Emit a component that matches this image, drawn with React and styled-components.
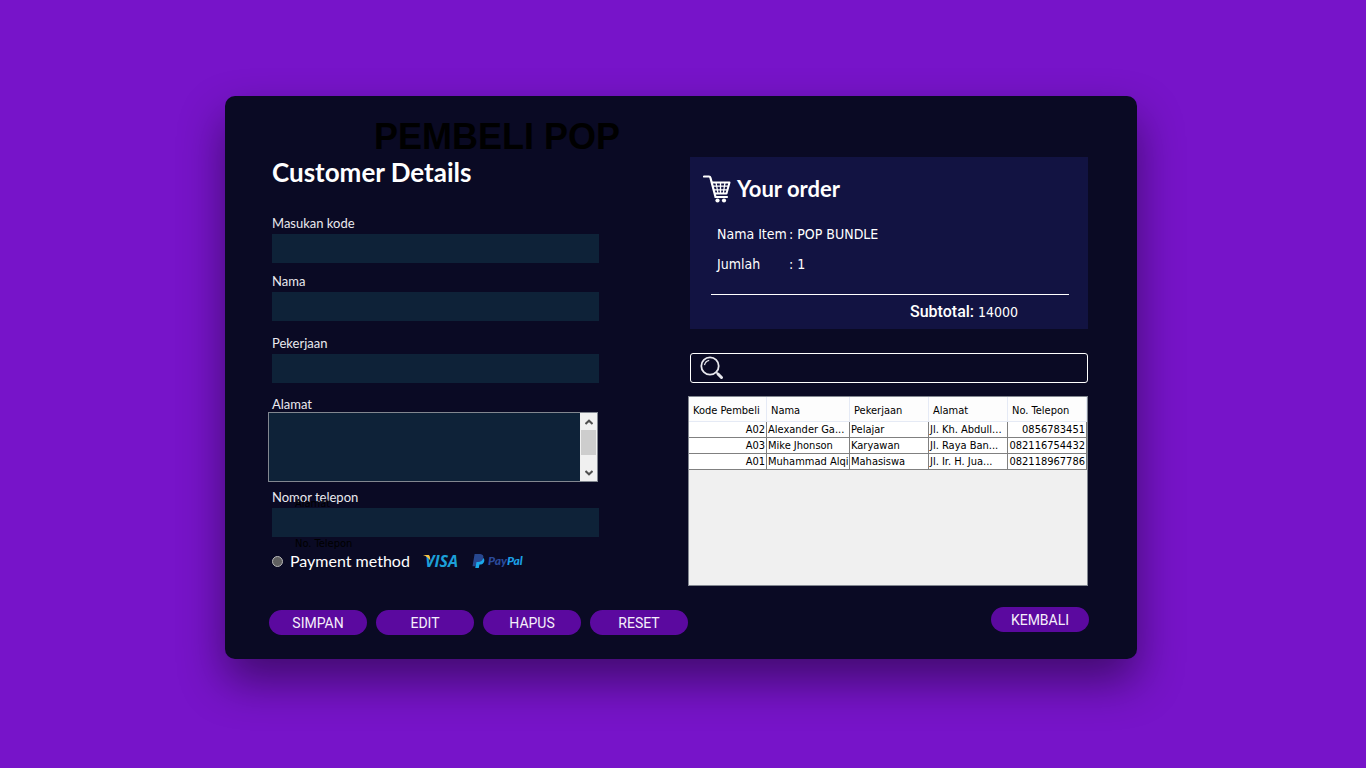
import React from "react";
import styled, { createGlobalStyle } from "styled-components";

const geometric = `"Century Gothic", Lato, "Open Sans", sans-serif`;
const tahoma = `Tahoma, "DejaVu Sans Condensed", "DejaVu Sans", sans-serif`;

const GlobalStyle = createGlobalStyle`
  *, *::before, *::after { box-sizing: border-box; }
  body {
    margin: 0;
    background: #7714c9;
    color: #ffffff;
    font-family: ${geometric};
  }
  #root { min-height: 100vh; }
`;

const Page = styled.div`
  min-height: 100vh;
  padding: 96px 229px 109px 225px;
`;

const Card = styled.main`
  padding: 21px 48px 24px 43px;
  background: #0a0a24;
  border-radius: 10px;
  box-shadow: 0 22px 46px rgba(0, 0, 0, 0.45);
`;

const PageTitle = styled.h1`
  margin: 0;
  padding-left: 106px;
  color: #000000;
  font: bold 36px/40px "Liberation Sans", Arial, sans-serif;
`;

const Columns = styled.div`
  display: grid;
  grid-template-columns: minmax(0, 332fr) minmax(0, 401fr);
  column-gap: 88px;
  align-items: start;
`;

const CustomerForm = styled.form`
  display: flex;
  flex-direction: column;
`;

const FormHeading = styled.h2`
  margin: 0 0 28px;
  padding-left: 4px;
  font-size: 26px;
  line-height: 30px;
  font-weight: 700;
`;

const Field = styled.div`
  position: relative;
  display: flex;
  flex-direction: column;
  padding: 0 1px 0 ${(p) => (p.$wide ? 0 : 4)}px;
  margin-bottom: ${(p) => p.$space}px;
`;

const Label = styled.label`
  padding-left: ${(p) => (p.$indent ? 4 : 0)}px;
  margin-bottom: ${(p) => (p.$indent ? 0 : 3)}px;
  color: #e9e9ee;
  font-size: 13px;
  line-height: 16px;
`;

const TextInput = styled.input`
  position: relative;
  width: 100%;
  height: 29px;
  padding: 0 8px;
  border: 0;
  outline: 0;
  background: #0e2238;
  color: #ffffff;
  font: 13px ${tahoma};
`;

const ScrollFrame = styled.div`
  display: flex;
  height: 70px;
  margin-right: 1px;
  border: 1px solid #828790;
  background: #0e2238;
`;

const TextArea = styled.textarea`
  flex: 1;
  min-width: 0;
  padding: 4px;
  border: 0;
  outline: 0;
  resize: none;
  overflow: hidden;
  background: transparent;
  color: #ffffff;
  font: 13px ${tahoma};
`;

const ScrollBar = styled.div`
  display: flex;
  flex-direction: column;
  width: 17px;
  padding: 0 1px;
  background: #f0f0f0;
`;

const ScrollButton = styled.button`
  display: flex;
  align-items: center;
  justify-content: center;
  height: 17px;
  padding: 0;
  border: 0;
  background: transparent;
`;

const ScrollThumb = styled.div`
  height: 25px;
  margin-bottom: auto;
  background: #cdcdcd;
`;

const StrayCaption = styled.span`
  position: absolute;
  left: 27px;
  top: ${(p) => p.$top}px;
  color: #000000;
  font: 11px/14px ${tahoma};
`;

const Payment = styled.div`
  display: flex;
  align-items: center;
  height: 20px;
  padding-left: 4px;
`;

const PaymentRadio = styled.input`
  appearance: none;
  width: 11px;
  height: 11px;
  margin: 0 7px 0 0;
  border: 1px solid #b9b9b9;
  border-radius: 50%;
  background: #5f5f5f;
`;

const PaymentLabel = styled.label`
  font-size: 16px;
  line-height: 20px;
`;

const CardBrands = styled.div`
  display: flex;
  align-items: center;
  gap: 10px;
  margin-left: 12px;
`;

const OrderColumn = styled.div`
  display: flex;
  flex-direction: column;
`;

const OrderPanel = styled.section`
  height: 172px;
  margin: 0 1px 24px 2px;
  padding: 17px 19px 0 13px;
  background: #121342;
`;

const OrderHeading = styled.h2`
  display: flex;
  align-items: center;
  gap: 6px;
  margin: 0 0 15px;
  font-size: 22px;
  line-height: 30px;
  font-weight: 700;
`;

const OrderLines = styled.dl`
  display: grid;
  grid-template-columns: 72px 1fr;
  margin: 0 0 15px 14px;
  font: 14px/30px ${tahoma};

  dt, dd { margin: 0; }
`;

const Subtotal = styled.div`
  display: flex;
  gap: 4px;
  margin-left: 8px;
  padding-left: 199px;
  border-top: 1px solid #ffffff;
  font: 14px/34px ${tahoma};
`;

const SubtotalLabel = styled.span`
  font: 500 16px/34px Roboto, sans-serif;
`;

const SearchBox = styled.label`
  display: flex;
  align-items: center;
  gap: 8px;
  height: 30px;
  margin: 0 1px 13px 2px;
  padding: 0 8px;
  border: 1px solid #ffffff;
  border-radius: 3px;
`;

const SearchInput = styled.input`
  flex: 1;
  min-width: 0;
  border: 0;
  outline: 0;
  background: transparent;
  color: #ffffff;
  font: 14px ${tahoma};
`;

const TableFrame = styled.div`
  height: 190px;
  margin-right: 1px;
  border: 1px solid #828790;
  background: #f0f0f0;
  color: #000000;
`;

const Table = styled.table`
  width: 100%;
  table-layout: fixed;
  border-collapse: separate;
  border-spacing: 0;
  font: 11px/15px ${tahoma};
`;

const HeadCell = styled.th`
  width: ${(p) => p.$width};
  height: 25px;
  padding: 2px 0 0 4px;
  overflow: hidden;
  background: #fdfdfd;
  border-right: 1px solid #e5eaf5;
  border-bottom: 1px solid #e5eaf5;
  font-weight: 400;
  text-align: left;
  white-space: nowrap;
`;

const Cell = styled.td`
  height: 16px;
  padding: 0 ${(p) => (p.$numeric ? 1 : 0)}px 0 1px;
  overflow: hidden;
  background: #ffffff;
  border-right: 1px solid #808080;
  border-bottom: 1px solid #808080;
  text-align: ${(p) => (p.$numeric ? "right" : "left")};
  white-space: nowrap;
`;

const Actions = styled.div`
  display: flex;
  justify-content: space-between;
  padding: 21px 0 0 1px;
`;

const ActionGroup = styled.div`
  display: flex;
  gap: 9px;
  padding-top: 3px;
`;

const PillButton = styled.button`
  width: 98px;
  height: 25px;
  padding: 1px 0 0;
  border: 0;
  border-radius: 13px;
  background: #5b099f;
  color: #f5effa;
  font: 14px/24px Roboto, sans-serif;
`;

const buyers = [
  ["A02", "Alexander Ga...", "Pelajar", "Jl. Kh. Abdull...", "0856783451"],
  ["A03", "Mike Jhonson", "Karyawan", "Jl. Raya Ban...", "082116754432"],
  ["A01", "Muhammad Alqi", "Mahasiswa", "Jl. Ir. H. Jua...", "082118967786"],
];

const columns = [
  { title: "Kode Pembeli", width: "78px" },
  { title: "Nama", width: "83px" },
  { title: "Pekerjaan", width: "auto" },
  { title: "Alamat", width: "auto" },
  { title: "No. Telepon", width: "auto" },
];

function Chevron({ up }) {
  return (
    <svg width="8" height="6" viewBox="0 0 8 6" aria-hidden="true">
      <path
        d={up ? "M.5 5 4 1.700 7.500 5" : "M.5 1 4 4.300 7.500 1"}
        fill="none"
        stroke="#505050"
        strokeWidth="2"
      />
    </svg>
  );
}

function CartIcon() {
  return (
    <svg width="28" height="28" viewBox="0 0 28 28" fill="none" stroke="#fff" aria-hidden="true">
      <path d="M1 1.500h5c1 0 1.300.6 1.500 1.400L12.500 22H24" strokeWidth="2.200" strokeLinecap="round" />
      <path d="M8.500 7.500H26.500L23.500 18.500H11.500" strokeWidth="2" strokeLinejoin="round" />
      <path d="M9.500 11.200H25.500M10.500 14.800H24.500M13 7.500l2 11M17.500 7.500v11M22 7.500l-1.700 11" strokeWidth="1.300" />
      <circle cx="14.500" cy="25.500" r="2.100" fill="#fff" stroke="none" />
      <circle cx="21" cy="25.500" r="2.100" fill="#fff" stroke="none" />
    </svg>
  );
}

function SearchIcon() {
  return (
    <svg width="26" height="26" viewBox="0 0 26 26" fill="none" stroke="#e8e8ee" aria-hidden="true">
      <circle cx="11" cy="11" r="8.700" strokeWidth="1.800" />
      <path d="M5.500 10.200A6 6 0 0 1 10.200 5.300" strokeWidth="1.200" />
      <path d="M17.300 17.300l1.500 1.500" strokeWidth="1.600" />
      <path d="M19 19l3.500 3.500" strokeWidth="3" strokeLinecap="round" />
    </svg>
  );
}

function VisaLogo() {
  return (
    <svg width="40" height="16" viewBox="0 0 40 16" role="img" aria-label="Visa">
      <text x="3" y="14" fill="#1c9fd8" fontFamily="Open Sans, sans-serif" fontSize="16" fontWeight="700" fontStyle="italic">
        VISA
      </text>
      <path d="M1 2h5c1.100 0 1.600.6 1.800 1.500L8.500 8C7 5.200 4.500 3.200 1 2z" fill="#f6c344" />
    </svg>
  );
}

function PayPalLogo() {
  return (
    <svg width="58" height="16" viewBox="0 0 58 16" role="img" aria-label="PayPal">
      <path d="M4.500 4.500h5.300c2.300.5 3 2.200 2.300 4.200-.7 2-2.300 2.800-4.600 2.800L6.800 15H3.300z" fill="#1ba8ea" />
      <path d="M2.600 1h5.600c2.600.2 3.700 1.700 3.100 4-.7 2.800-2.600 4-5.300 4H4.500L3.700 13.200H.5z" fill="#27478f" />
      <text x="16" y="12" fontFamily="Lato, sans-serif" fontSize="12" fontWeight="900" fontStyle="italic">
        <tspan fill="#2b4a9b">Pay</tspan>
        <tspan fill="#1ba0e6">Pal</tspan>
      </text>
    </svg>
  );
}

export default function App() {
  return (
    <>
      <GlobalStyle />
      <Page>
        <Card>
          <PageTitle>PEMBELI POP</PageTitle>
          <Columns>
            <CustomerForm id="customer" onSubmit={(e) => e.preventDefault()}>
              <FormHeading>Customer Details</FormHeading>
              <Field $space={10}>
                <Label htmlFor="kode">Masukan kode</Label>
                <TextInput id="kode" />
              </Field>
              <Field $space={14}>
                <Label htmlFor="nama">Nama</Label>
                <TextInput id="nama" />
              </Field>
              <Field $space={13}>
                <Label htmlFor="pekerjaan">Pekerjaan</Label>
                <TextInput id="pekerjaan" />
              </Field>
              <Field $space={7} $wide>
                <Label htmlFor="alamat" $indent>Alamat</Label>
                <ScrollFrame>
                  <TextArea id="alamat" />
                  <ScrollBar>
                    <ScrollButton type="button" aria-label="Scroll up"><Chevron up /></ScrollButton>
                    <ScrollThumb />
                    <ScrollButton type="button" aria-label="Scroll down"><Chevron /></ScrollButton>
                  </ScrollBar>
                </ScrollFrame>
              </Field>
              <Field $space={14}>
                <Label htmlFor="telepon">Nomor telepon</Label>
                <StrayCaption $top={8}>Alamat</StrayCaption>
                <TextInput id="telepon" />
                <StrayCaption $top={48}>No. Telepon</StrayCaption>
              </Field>
              <Payment>
                <PaymentRadio type="radio" id="payment" name="payment" />
                <PaymentLabel htmlFor="payment">Payment method</PaymentLabel>
                <CardBrands>
                  <VisaLogo />
                  <PayPalLogo />
                </CardBrands>
              </Payment>
            </CustomerForm>

            <OrderColumn>
              <OrderPanel>
                <OrderHeading><CartIcon />Your order</OrderHeading>
                <OrderLines>
                  <dt>Nama Item</dt>
                  <dd>: POP BUNDLE</dd>
                  <dt>Jumlah</dt>
                  <dd>: 1</dd>
                </OrderLines>
                <Subtotal>
                  <SubtotalLabel>Subtotal:</SubtotalLabel>
                  <span>14000</span>
                </Subtotal>
              </OrderPanel>
              <SearchBox>
                <SearchIcon />
                <SearchInput type="text" aria-label="Cari pembeli" />
              </SearchBox>
              <TableFrame>
                <Table>
                  <thead>
                    <tr>
                      {columns.map((c) => (
                        <HeadCell key={c.title} scope="col" $width={c.width}>{c.title}</HeadCell>
                      ))}
                    </tr>
                  </thead>
                  <tbody>
                    {buyers.map((row) => (
                      <tr key={row[0]}>
                        {row.map((value, i) => (
                          <Cell key={columns[i].title} $numeric={i === 0 || i === 4}>{value}</Cell>
                        ))}
                      </tr>
                    ))}
                  </tbody>
                </Table>
              </TableFrame>
            </OrderColumn>
          </Columns>
          <Actions>
            <ActionGroup>
              <PillButton type="submit" form="customer">SIMPAN</PillButton>
              <PillButton type="button">EDIT</PillButton>
              <PillButton type="button">HAPUS</PillButton>
              <PillButton type="reset" form="customer">RESET</PillButton>
            </ActionGroup>
            <PillButton type="button">KEMBALI</PillButton>
          </Actions>
        </Card>
      </Page>
    </>
  );
}
